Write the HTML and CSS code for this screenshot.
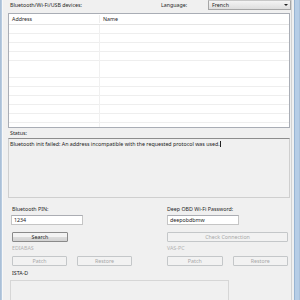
FILE: index.html
```html
<!DOCTYPE html>
<html>
<head>
<meta charset="utf-8">
<link rel="stylesheet" href="styles.css">
</head>
<body>
<div class="window">
  <div class="edge-l"></div>
  <div class="main">
    <div class="top">
      <span class="lbl pad2">Bluetooth/Wi-Fi/USB devices:</span>
      <span class="lbl">Language:</span>
      <div class="combo"><span>French</span><i class="arrow"></i></div>
    </div>
    <div class="list">
      <div class="list-head">
        <div class="col col1">Address</div>
        <div class="col">Name</div>
      </div>
      <div class="list-body"></div>
    </div>
    <div class="status-lbl lbl pad2">Status:</div>
    <div class="status-box">Bluetooth init failed: An address incompatible with the requested protocol was used.<span class="caret"></span></div>
    <div class="lower">
      <div class="row r-lbl">
        <span class="lbl ind">Bluetooth PIN:</span>
        <span class="lbl">Deep OBD Wi-Fi Password:</span>
      </div>
      <div class="row r-input">
        <div class="input">1234</div>
        <div class="input">deepobdbmw</div>
      </div>
      <div class="row r-btn">
        <div class="ind"><button class="btn w-search">Search</button></div>
        <div><button class="btn dis w-check">Check Connection</button></div>
      </div>
      <div class="row r-lbl2">
        <span class="lbl dis-t ind">EDIABAS</span>
        <span class="lbl dis-t">VAS-PC</span>
      </div>
      <div class="row r-btn2">
        <div class="pair ind"><button class="btn dis w-55">Patch</button><button class="btn dis w-55">Restore</button></div>
        <div class="pair"><button class="btn dis w-56">Patch</button><button class="btn dis w-56">Restore</button></div>
      </div>
      <div class="r-lbl3 lbl ind">ISTA-D</div>
      <div class="ista-box"></div>
    </div>
  </div>
  <div class="edge-r"></div>
</div>
</body>
</html>
```
FILE: styles.css
```css
html, body {
  margin: 0;
  padding: 0;
}
body {
  width: 300px;
  height: 300px;
  overflow: hidden;
  background: #f0f0f0;
  font-family: "Noto Sans", "DejaVu Sans", sans-serif;
  font-size: 5.3px;
  color: #262626;
}
.window {
  display: flex;
  height: 300px;
}
.edge-l {
  width: 2px;
  border-right: 1px solid #f8f8f8;
  background: linear-gradient(to right, #a3bad3, #bfd1e4);
}
.edge-r {
  width: 9px;
  background: linear-gradient(to right, #d2d2d2 0 1px, #f0f0f0 1px 3px, #98b4d2 3px 4px, #b6cde6 4px 8px, #a9c1db 8px);
}
.main {
  flex: 1;
  padding: 0 0 0 5px;
  display: flex;
  flex-direction: column;
}
.lbl {
  line-height: 8px;
  white-space: nowrap;
}
.pad2 {
  padding-left: 2px;
}
.top {
  height: 13px;
  display: grid;
  grid-template-columns: 1fr 47px 83px;
  align-items: start;
}
.top .lbl {
  padding-top: 1px;
}
.combo {
  height: 10px;
  box-sizing: border-box;
  border: 1px solid #a6a6a6;
  border-top-color: #c8c8c8;
  background: linear-gradient(#f4f4f4, #dedede);
  display: flex;
  align-items: center;
  justify-content: space-between;
  padding: 0 2px 0 3px;
  color: #222;
}
.arrow {
  width: 0;
  height: 0;
  border-left: 2px solid transparent;
  border-right: 2px solid transparent;
  border-top: 2px solid #222;
}
.list {
  width: 282px;
  height: 120px;
  box-sizing: border-box;
  border: 1px solid #a9adb5;
  background: #fff;
  display: flex;
  flex-direction: column;
}
.list-head {
  height: 11px;
  box-sizing: border-box;
  border-bottom: 1px solid #e5e5e5;
  display: grid;
  grid-template-columns: 91px 1fr;
  align-items: center;
}
.col {
  padding-left: 3px;
  line-height: 8px;
}
.col1 {
  border-right: 1px solid #eeeeee;
}
.list-body {
  flex: 1;
  background:
    linear-gradient(to right, transparent 90px, #f0f0f0 90px 91px, transparent 91px),
    repeating-linear-gradient(to bottom, transparent 0 8px, #eeeeee 8px 8.9px);
}
.status-lbl {
  height: 10px;
  line-height: 10px;
}
.status-box {
  width: 282px;
  height: 62px;
  box-sizing: border-box;
  border: 1px solid #cfcfcf;
  border-top-color: #8d8d8d;
  padding: 1px 0 0 1px;
  line-height: 8px;
  color: #222;
}
.caret {
  display: inline-block;
  width: 1px;
  height: 6px;
  background: #222;
  vertical-align: -1px;
}
.lower {
  padding-left: 3px;
  display: flex;
  flex-direction: column;
}
.row {
  display: grid;
  grid-template-columns: 156px 121px;
}
.ind {
  margin-left: 1px;
}
.r-lbl {
  margin-top: 7px;
  height: 8px;
}
.r-input {
  margin-top: 2px;
}
.input {
  width: 72px;
  height: 10px;
  box-sizing: border-box;
  border: 1px solid #c5c5c5;
  border-top-color: #abadb3;
  background: #fff;
  line-height: 8px;
  padding-left: 2px;
  color: #222;
}
.r-btn {
  margin-top: 7px;
}
.btn {
  display: block;
  height: 10px;
  box-sizing: border-box;
  margin: 0;
  padding: 0;
  border: 1px solid #8a8a8a;
  border-radius: 1px;
  background: linear-gradient(#f3f3f3 0 45%, #dcdcdc 55%, #d2d2d2);
  font-family: inherit;
  font-size: 5.3px;
  line-height: 8px;
  color: #222;
  text-align: center;
}
.btn.dis {
  border-color: #c4c7c9;
  background: #f2f2f2;
  color: #a8a8a8;
}
.dis-t {
  color: #b0b0b0;
}
.w-search {
  width: 56px;
}
.w-check {
  width: 121px;
}
.w-55 {
  width: 55px;
}
.w-56 {
  width: 56px;
}
.r-lbl2 {
  margin-top: 2px;
  height: 8px;
}
.r-btn2 {
  margin-top: 4px;
}
.pair {
  display: flex;
  gap: 10px;
}
.r-lbl3 {
  margin-top: 3px;
  height: 8px;
  color: #222;
}
.ista-box {
  margin-top: 3px;
  margin-left: -1px;
  width: 219px;
  height: 20px;
  box-sizing: border-box;
  border: 1px solid #d6d6d6;
  border-bottom: none;
}
```
